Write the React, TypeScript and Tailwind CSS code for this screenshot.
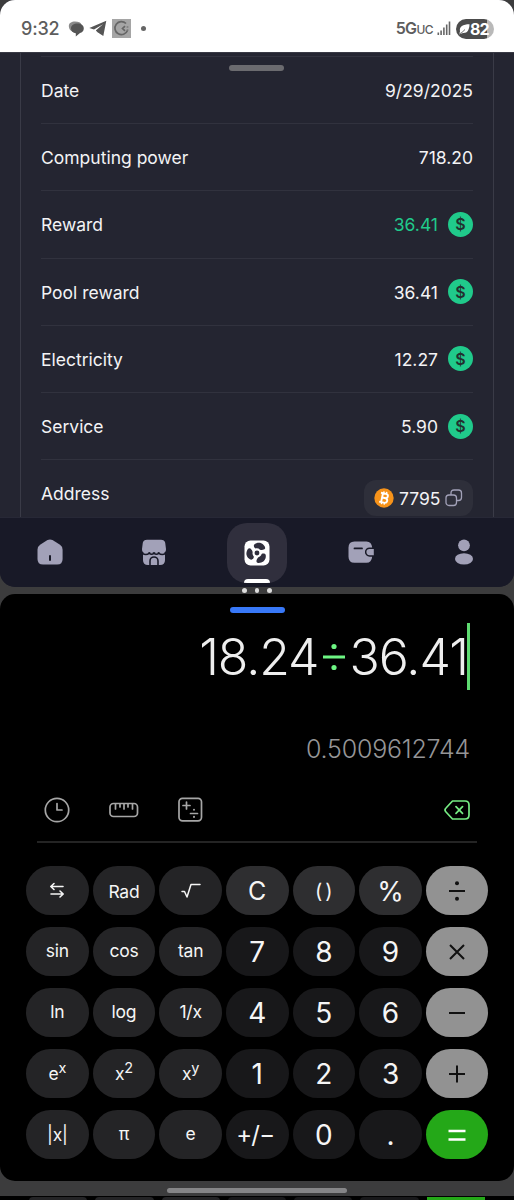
import type { ReactNode } from "react";

const rows = [
  { label: "Reward", value: "36.41", green: true },
  { label: "Pool reward", value: "36.41" },
  { label: "Electricity", value: "12.27" },
  { label: "Service", value: "5.90" },
];

function StatusBar() {
  return (
    <header className="flex h-[52px] shrink-0 items-center bg-white pt-[5px] pr-5 pl-[21px] text-[#5d5d5d]">
      <span className="w-[40px] text-[18px] leading-5 font-medium tracking-[-0.2px]">9:32</span>
      <svg className="ml-[7px]" width="17" height="16" viewBox="0 0 17 16">
        <path d="M.8 5C.8 2 3.500.5 7 .5c3.500 0 6 1.200 6.500 3L5 11C2.500 10 .8 8 .8 5z" fill="#8a8a8a" />
        <path d="M3 7.500C3 4.300 6 2.600 9.500 2.600S15.800 4.400 15.800 7.500c0 2.400-1.700 4-3.800 4.500L7.800 15.500V12.200C5 12 3 10.200 3 7.500z" fill="#555" />
      </svg>
      <svg className="ml-[4px]" width="18" height="17" viewBox="0 0 18 17">
        <path d="M17.300.8 14.300 16 8.500 12.300 6.800 10.500 14 4.200 5 9.600.3 8z" fill="#555" />
      </svg>
      <svg className="ml-[5px]" width="19" height="19" viewBox="0 0 19 19">
        <path d="M0 0h19v19H0z" fill="#a5a5a5" />
        <g fill="none" stroke="#666" strokeWidth="1.700">
          <path d="M14 4.500A6.500 6.500 0 1 0 15.500 11.500" />
          <path d="M13 7.200 10.500 9.500l2.500 2.300M15.500 7.500v1M15.500 10.500v1" />
        </g>
      </svg>
      <span className="ml-[10px] size-[5px] rounded-full bg-[#666]" />
      <span className="ml-auto text-[16px] leading-5 font-semibold tracking-[-0.6px]">5G<span className="text-[12px] font-medium">UC</span></span>
      <svg className="ml-[4px]" width="14" height="15" viewBox="0 0 14 15" fill="#666">
        <path d="M.5 11.500h1.600V14H.5zM3.300 9.500h1.600V14H3.300zM6.100 6.500h1.600V14H6.100zM8.900 3.500h1.600V14H8.900zM11.700 .5h1.600V14h-1.600z" />
      </svg>
      <span className="ml-[5px] flex h-5 w-[38px] shrink-0 items-center overflow-hidden rounded-full bg-linear-to-r from-[#4c4c4c] from-82% to-[#b9b9b9] to-82% pl-[2px] text-white">
        <svg className="shrink-0" width="12" height="12" viewBox="0 0 12 12">
          <path d="M2 8.500C1 3.500 5 1.300 11.500 1.300 11.500 7 9 10.500 5 10L1 11.500z" fill="#fff" />
          <path d="M.8 11.300Q4 10 7 6.500" stroke="#4c4c4c" strokeWidth=".8" fill="none" />
        </svg>
        <b className="text-[16px] leading-5 font-bold tracking-[-0.9px]">82</b>
      </span>
    </header>
  );
}

function Coin() {
  return (
    <span className="flex size-[25px] items-center justify-center rounded-full bg-[#20ca8b] text-[16px] leading-none font-semibold text-[#22302f]">
      $
    </span>
  );
}

function Row({ label, children }: { label: string; children: ReactNode }) {
  return (
    <div className="flex h-[67.2px] items-center justify-between border-t border-[#31323e]">
      <span className="pt-[2px]">{label}</span>
      <span className="flex items-center gap-[10px]">{children}</span>
    </div>
  );
}

const blade = "M12 4.200c3-1.800 7-1 8.800 1.800 1.300 2 1.700 3.600.8 4.600-1 .9-3 .8-5-.2C15.700 9 14.300 8.300 12.500 8.300 11.200 7.300 11 5 12 4.200z";

function NavBar() {
  return (
    <nav className="flex h-[70px] shrink-0 justify-between border-t border-[#272836] bg-[#181927] px-5 text-[#a2a1b8]">
      <span className="flex w-[60px] items-center justify-center">
        <svg width="26" height="26" viewBox="0 0 26 26">
          <path d="M10.500 1.100q2.500-1.400 5 0l7.500 4.700q2.600 1.700 2.600 5V20q0 5.500-5.500 5.500h-14Q.5 25.500.5 20v-9.200q0-3.300 2.600-5z" fill="currentColor" />
          <path d="M13 17v4" stroke="#181927" strokeWidth="2" strokeLinecap="round" />
        </svg>
      </span>
      <span className="flex w-[60px] items-center justify-center">
        <svg width="26" height="27" viewBox="0 0 26 27">
          <path d="M2 14h22v7q0 5-5 5H7q-5 0-5-5z" fill="currentColor" />
          <path d="M6 .8h14q3.500 0 4.200 3L25 10q.2 3.500-3 4.300-2.500.4-4.300-1.300-2.300 2-4.700 0-2.400 2-4.700 0-1.800 1.700-4.300 1.300Q.8 13.500 1 10l.8-6.200Q2.500.8 6 .8z" fill="currentColor" />
          <path d="M1.500 14.500q3.500 2 6.700-.2 2.400 1.800 4.800 0 2.400 1.800 4.800 0 3.200 2.200 6.700.2M9 26v-4a4 4 0 0 1 8 0v4" fill="none" stroke="#181927" strokeWidth="1.600" />
        </svg>
      </span>
      <span className="mt-[5px] flex h-[60px] w-[60px] flex-col items-center justify-between overflow-hidden rounded-[20px] bg-[#302f3d] pt-[17px] text-white">
        <svg width="26" height="26" viewBox="0 0 26 26">
          <rect x=".5" y=".5" width="25" height="25" rx="6" fill="currentColor" />
          <g fill="#302f3d">
            <circle cx="13" cy="13" r="2.400" />
            <g transform="rotate(-12 13 13)">
              <path d={blade} />
              <path d={blade} transform="rotate(120 13 13)" />
              <path d={blade} transform="rotate(240 13 13)" />
            </g>
          </g>
        </svg>
        <span className="h-1 w-[26px] rounded-t-[4px] bg-white" />
      </span>
      <span className="flex w-[60px] items-center justify-center">
        <svg width="26" height="22" viewBox="0 0 26 22">
          <path d="M6.500.5h12q5 0 5.700 6H21.500a4.600 4.600 0 0 0 0 9.200h2.700q-.7 6-5.700 6h-12q-6 0-6-6v-9.200q0-6 6-6z" fill="currentColor" />
          <path d="M21.500 8H25.800v6.200H21.500a3.100 3.100 0 0 1 0-6.200z" fill="currentColor" />
          <path d="M6.500 7.400h7.500" stroke="#181927" strokeWidth="1.800" strokeLinecap="round" />
        </svg>
      </span>
      <span className="flex w-[60px] items-center justify-center">
        <svg width="20" height="26" viewBox="0 0 20 26" fill="currentColor">
          <circle cx="10" cy="6.300" r="5.900" />
          <ellipse cx="10" cy="19.900" rx="9" ry="5.700" />
        </svg>
      </span>
    </nav>
  );
}

function MiningPanel() {
  return (
    <section className="flex h-[587px] flex-col overflow-hidden rounded-[15px] bg-[#242531]">
      <StatusBar />
      <div className="relative h-[465px] overflow-hidden border-t border-[#393a45] px-5 text-[17.500px] text-[#f3f3f5]">
        <span className="absolute top-[12px] left-[229px] h-[6px] w-[55px] rounded-full bg-[#6b6b6f]" />
        <div className="border-x border-[#3a3b47] px-5 pt-[3px]">
          <Row label="Date"><span className="pt-[2px]">9/29/2025</span></Row>
          <Row label="Computing power"><span className="pt-[2px]">718.20</span></Row>
          {rows.map((r) => (
            <Row key={r.label} label={r.label}>
              <span className={r.green ? "pt-px text-[#20ca8b]" : "pt-[2px]"}>{r.value}</span>
              <Coin />
            </Row>
          ))}
          <div className="flex h-[67px] items-start justify-between border-t border-[#31323e]">
            <span className="pt-[21px]">Address</span>
            <span className="mt-[20px] flex h-9 w-[109px] items-center rounded-xl bg-[#2e2f3a] pl-[10px]">
              <svg width="20" height="20" viewBox="0 0 20 20">
                <circle cx="10" cy="10" r="9.700" fill="#f7931a" />
                <g transform="rotate(12 10 10)" fill="none" stroke="#fff" strokeWidth="1.900">
                  <path d="M6 5.500h5.200a2.200 2.200 0 0 1 0 4.400H8h3.800a2.400 2.400 0 0 1 0 4.700H6M8 5.500v9.100" />
                  <path d="M8.700 3.500v2M11.500 3.500v2M8.700 14.500v2M11.500 14.500v2" strokeWidth="1.400" />
                </g>
              </svg>
              <span className="ml-[5px] w-[42px] pt-[2px]">7795</span>
              <svg className="ml-[4px]" width="18" height="18" viewBox="0 0 18 18" fill="none" stroke="#a2a1b8" strokeWidth="1.300">
                <rect x="1" y="6" width="10.500" height="10.500" rx="3" />
                <path d="M6 6V4q0-3 3-3h4.500q3 0 3 3v4.500q0 3-3 3h-2" />
              </svg>
            </span>
          </div>
        </div>
      </div>
      <NavBar />
    </section>
  );
}

const ink = { fill: "none", stroke: "currentColor", strokeLinecap: "round", strokeLinejoin: "round" } as const;

const swap = (
  <svg className="mt-[2px]" width="16" height="18" viewBox="0 0 16 18" {...ink} strokeWidth="1.600">
    <path d="M14 5.500H2M5 2.500l-3.200 3L5 8.500M2 13h12M11 10l3.200 3-3.200 3" />
  </svg>
);
const root = (
  <svg className="mt-[3px]" width="20" height="16" viewBox="0 0 20 16" {...ink} strokeWidth="1.500">
    <path d="M1 8.500h2.500L6 14l4-12.500h9" />
  </svg>
);
const operator = (d: string) => (
  <svg width="18" height="20" viewBox="0 0 18 20" fill="none" stroke="#111" strokeWidth="2">
    <path d={d} />
  </svg>
);
const divide = (
  <svg width="18" height="22" viewBox="0 0 18 22">
    <path d="M1 11h16" stroke="#111" strokeWidth="2" />
    <circle cx="9" cy="3.200" r="2" fill="#111" />
    <circle cx="9" cy="18.800" r="2" fill="#111" />
  </svg>
);
const equals = (
  <svg className="mt-px" width="18" height="16" viewBox="0 0 18 16" stroke="#fff" strokeWidth="2.500">
    <path d="M.5 4h17M.5 12.500h17" />
  </svg>
);

type Kind = "fn" | "top" | "num" | "op" | "eq";
const kinds: Record<Kind, string> = {
  fn: "bg-[#242426] text-[17.500px] pb-[3px] tracking-[-0.2px]",
  top: "bg-[#2e2e30] text-[25px] pt-px",
  num: "bg-[#18181a] text-[28px] pt-px",
  op: "bg-[#929292]",
  eq: "bg-[#24a818]",
};

const power = (base: string, exp: string) => (
  <span className="pt-[3px]">
    {base}
    <sup className="-top-[7px] text-[14.500px]">{exp}</sup>
  </span>
);

const keys: [ReactNode, Kind][] = [
  [swap, "fn"], [<span className="pt-[4px]">Rad</span>, "fn"], [root, "fn"], [<span>C</span>, "top"], [<span className="pb-px pl-[3px] text-[20px] tracking-[3px]">()</span>, "top"], [<span className="text-[27px]">%</span>, "top"], [divide, "op"],
  ["sin", "fn"], ["cos", "fn"], ["tan", "fn"], ["7", "num"], ["8", "num"], ["9", "num"], [operator("M2 3l14 14M16 3 2 17"), "op"],
  ["ln", "fn"], ["log", "fn"], ["1/x", "fn"], ["4", "num"], ["5", "num"], ["6", "num"], [operator("M1 10h16"), "op"],
  [power("e", "x"), "fn"], [power("x", "2"), "fn"], [power("x", "y"), "fn"], ["1", "num"], ["2", "num"], ["3", "num"], [operator("M1 10h16M9 1.500v17"), "op"],
  [<span className="pt-[2px]">|x|</span>, "fn"], ["π", "fn"], ["e", "fn"], [<span className="pr-[4px] pb-px text-[24px] tracking-[-0.8px]">+/−</span>, "num"], ["0", "num"], [".", "num"], [equals, "eq"],
];

function Calculator() {
  return (
    <section className="flex h-[587px] flex-col overflow-hidden rounded-[15px] bg-black">
      <span className="mx-auto mt-[13px] h-[6px] w-[55px] shrink-0 rounded-full bg-[#3878f8]" />
      <div className="mt-[10px] mr-11 flex h-[67px] shrink-0 items-center justify-end text-[50px] leading-none font-[330] text-[#eeeeee]">
        <span className="tracking-[-1.100px]">18.24</span>
        <svg className="ml-[5px]" width="22" height="30" viewBox="0 0 22 30" fill="#6df583">
          <path d="M0 13.500h22v3H0z" />
          <circle cx="11" cy="4.500" r="2.600" />
          <circle cx="11" cy="25.500" r="2.600" />
        </svg>
        <span className="ml-[4px] tracking-[-0.900px]">36.41</span>
        <span className="-ml-px h-[67px] w-[3px] bg-[#5edb71]" />
      </div>
      <div className="mt-[43px] mr-[44px] h-8 shrink-0 text-right text-[25px] leading-8 font-light tracking-[-0.200px] text-[#959597]">0.5009612744</div>
      <div className="mx-[37px] mt-[11px] flex h-[67px] shrink-0 items-center border-b-2 border-[#242424] px-[7px] pt-[2px] text-[#a6a6a6]">
        <svg width="26" height="26" viewBox="0 0 26 26" {...ink} strokeWidth="1.700">
          <circle cx="13" cy="13" r="11.700" />
          <path d="M13 6.500V13h5" />
        </svg>
        <svg className="ml-[39px]" width="30" height="16" viewBox="0 0 30 16" {...ink} strokeWidth="1.700">
          <rect x="1" y="1.500" width="27.500" height="13" rx="3.500" />
          <path d="M6.500 2v5M11 2v3M15 2v5M19 2v3M23.500 2v5" />
        </svg>
        <svg className="ml-[39px]" width="25" height="25" viewBox="0 0 25 25" {...ink} strokeWidth="1.700">
          <rect x="1" y="1.300" width="22.500" height="22.500" rx="3.500" />
          <path d="M5 8.500h7M8.500 5v7M12.500 16.500h7" />
          <path d="M16 12.700v.1M16 19.800v.1" strokeWidth="2" />
        </svg>
        <svg className="ml-auto text-[#76ed84]" width="26" height="20" viewBox="0 0 26 20" {...ink} strokeWidth="1.700">
          <path d="M8.500 1H21q4 0 4 4v10q0 4-4 4H8.500L2 12q-2-2 0-4zM12 6.700l6.500 6.600M18.500 6.700 12 13.300" />
        </svg>
      </div>
      <div className="mt-[23px] ml-[26px] grid w-[462.500px] grid-cols-7 gap-x-1 gap-y-3 text-[#f5f5f5]">
        {keys.map(([content, kind], i) => (
          <button key={i} className={`flex h-[49px] items-center justify-center rounded-full leading-none ${kinds[kind]}`}>{content}</button>
        ))}
      </div>
    </section>
  );
}

export default function App() {
  return (
    <main className="flex h-[1200px] w-[514px] flex-col overflow-hidden bg-[#3c3c3d] font-['Inter','Liberation_Sans',sans-serif]">
      <MiningPanel />
      <div className="relative z-10 flex h-[7.500px] shrink-0 items-center justify-center gap-2 text-white">
        <i className="size-[4.500px] rounded-full bg-[#ddd]" />
        <i className="size-[4.500px] rounded-full bg-[#ddd]" />
        <i className="size-[4.500px] rounded-full bg-[#ddd]" />
      </div>
      <Calculator />
      <div className="flex h-[15px] items-end justify-center pb-[3px]">
        <span className="h-[5px] w-[180px] rounded-full bg-[#858587]" />
      </div>
      <div className="h-[4px] overflow-hidden bg-black px-[29px] pt-px">
        <div className="grid grid-cols-7 gap-x-2">
          {[0, 1, 2, 3, 4, 5].map((n) => (
            <span key={n} className={n < 3 ? "h-1 rounded-t-md bg-[#242426]" : "h-1 rounded-t-md bg-[#18181a]"} />
          ))}
          <span className="h-1 bg-[#24a818]" />
        </div>
      </div>
    </main>
  );
}
